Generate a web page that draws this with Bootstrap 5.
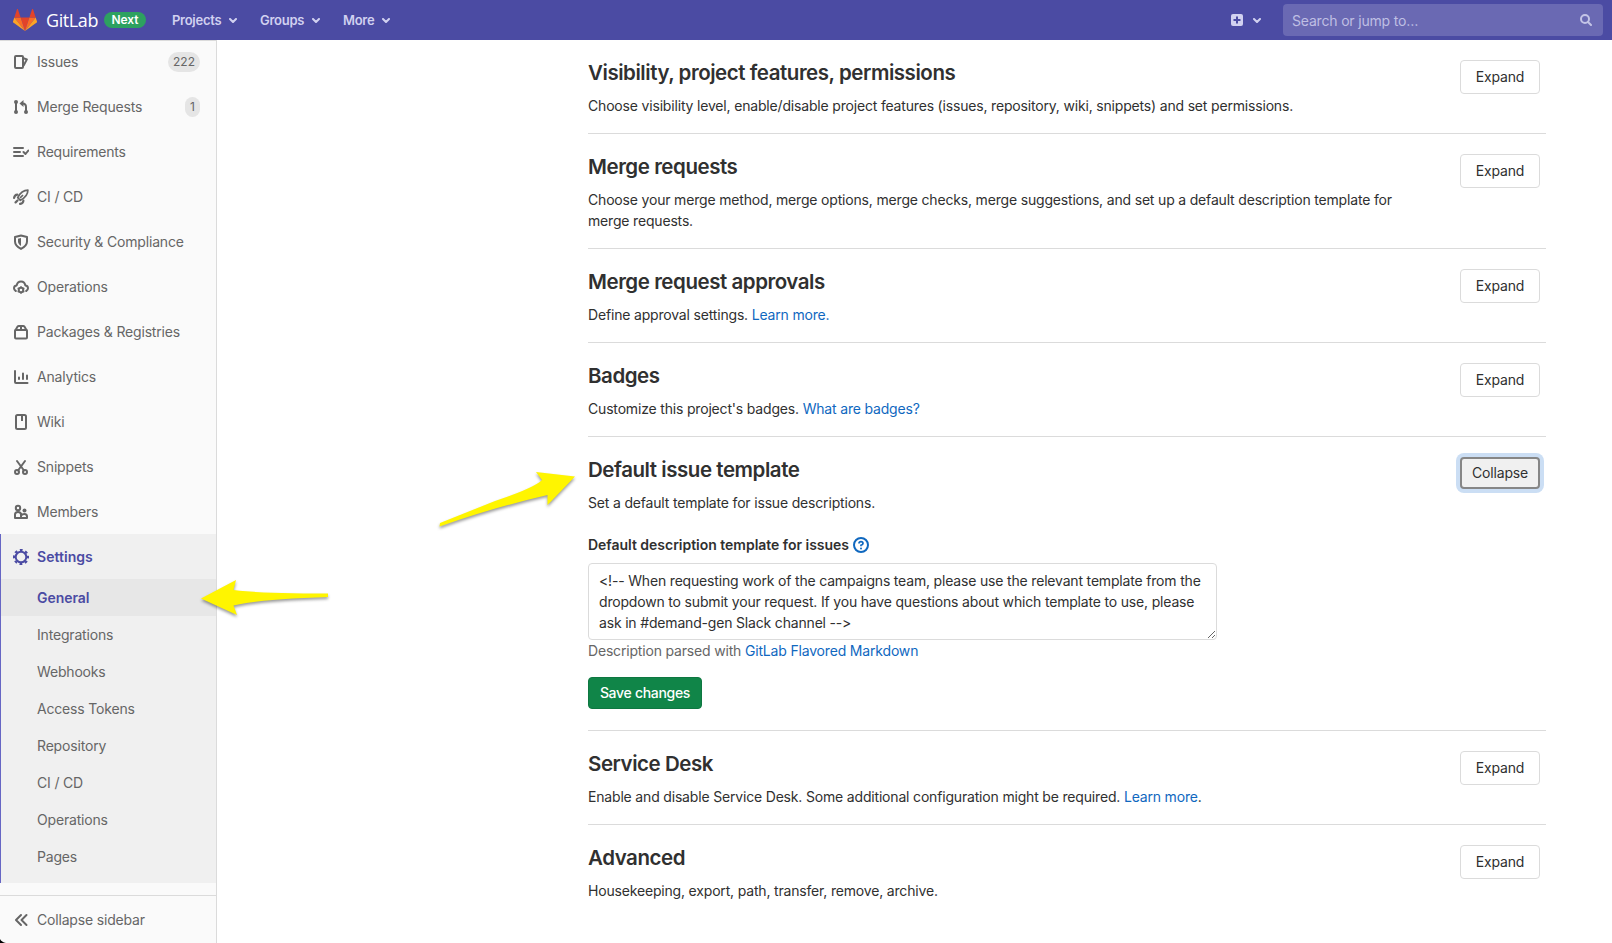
<!DOCTYPE html>
<html lang="en">
<head>
<meta charset="utf-8">
<meta name="viewport" content="width=device-width, initial-scale=1">
<title>General · Settings · GitLab</title>
<link href="https://cdn.jsdelivr.net/npm/bootstrap@5.3.0/dist/css/bootstrap.min.css" rel="stylesheet">
<script src="https://cdn.jsdelivr.net/npm/bootstrap@5.3.0/dist/js/bootstrap.bundle.min.js" defer></script>
<style>
body{font-family:Inter,"Noto Sans",sans-serif;font-size:14px;line-height:21px;letter-spacing:-.178px;color:#303030;height:943px;overflow:hidden;background:#fff}
a{color:#1068bf;text-decoration:none}
.topbar{height:40px;background:#4b4ba3;color:#d1d1f0;font-size:13px;flex:none}
.wordmark{font-family:"Open Sans",sans-serif;font-size:18px;color:#fff;line-height:20px;margin-left:9px;width:58px;letter-spacing:-.4px}
.next-pill{background:#2da160;width:42px;height:16px;font-size:12px;font-weight:600;line-height:16px;letter-spacing:-.1px}
.topnav{color:#d1d1f0;font-weight:600;font-size:13px;letter-spacing:-.27px}
.chev{width:8px;height:5px;fill:none;stroke:#d1d1f0;stroke-width:2;stroke-linecap:round;stroke-linejoin:round}
.search-box{width:320px;height:32px;background:#6a69b3;border-radius:4px;font-size:14px;color:#bfbfe3;padding:0 11px 0 9px;margin-right:9px}
.side{width:217px;background:#fafafa;border-right:1px solid #dbdbdb;border-top:1px solid #dbdbdb;color:#666;flex:none}
.side-item{height:45px;padding:0 16px 0 13px;flex:none}
.side-item svg{width:16px;height:16px;margin-right:8px;flex:none}
.side-item.first-item{margin-top:-2px}
.ico{fill:none;stroke:#666;stroke-width:2;stroke-linejoin:round}
.count-pill{background:#e5e5e5;border-radius:10px;font-size:12px;height:20px;line-height:20px;padding:0 5px;letter-spacing:0}
.open-group{background:#f0f0f0;border-left:1px solid #6666c4;padding-bottom:8px}
.open-group .side-item{padding-left:12px}
.sub-link{height:37px;padding-left:36px;display:flex;align-items:center}
.current{color:#4b4ba3;font-weight:600;letter-spacing:.04px}
.sub-link.current{background:#e7e7e7;letter-spacing:-.05px}
.collapse-bar{height:48px;border-top:1px solid #dbdbdb;margin-top:12px}
.main-col{width:958px;margin-left:371px}
.setting{border-bottom:1px solid #dbdbdb;padding:20px 6px 17px 0}
.setting:last-child{border:0}
.setting h4{font-size:20.5px;line-height:26px;margin:0 0 9px;font-weight:600;letter-spacing:-.45px;color:#303030}
.setting p{width:815px;margin:0}
.gl-btn{width:80px;height:34px;border:1px solid #dbdbdb;border-radius:4px;background:#fff;font-size:14px;line-height:20px;padding:0;color:#303030;flex:none;letter-spacing:-.18px}
.gl-btn.is-open{height:32px;border:2px solid #868686;background:#f0f0f0;box-shadow:0 0 0 4px #cbdef4}
.tpl-label{margin-top:21px;margin-bottom:8px;letter-spacing:-.02px}
.tpl-area{width:629px;height:77px;border:1px solid #dbdbdb;border-radius:4px;padding:6px 10px;font-size:14px;line-height:21px;letter-spacing:-.178px;color:#303030;display:block;resize:vertical;overflow:hidden}
.save-btn{background:#108548;border:1px solid #0e7741;color:#fff;width:114px;height:32px;border-radius:4px;font-size:14px;font-weight:500;padding:0;line-height:20px;letter-spacing:-.3px;margin-top:16px}
.pointer-arrows{left:0;top:0;pointer-events:none;filter:drop-shadow(0 2px 1.5px rgba(0,0,0,.4))}
</style>
</head>
<body class="d-flex flex-column position-relative">
<header class="topbar d-flex align-items-center">
  <svg width="24" height="22" viewBox="0 0 24 22" style="margin-left:13px"><path fill="#e24329" d="M12 22 16.4 8.4H7.6z"/><path fill="#fc6d26" d="M12 22 7.6 8.4H1.3zM12 22l4.4-13.6h6.3z"/><path fill="#fca326" d="M1.3 8.4 0 12.6c-.1.4 0 .8.3 1L12 22zM22.7 8.4 24 12.6c.1.4 0 .8-.3 1L12 22z"/><path fill="#e24329" d="M1.3 8.4h6.3L4.9.3C4.8-.1 4.2-.1 4 .3zM22.7 8.4h-6.3L19.1.3c.1-.4.7-.4.9 0z"/></svg>
  <span class="wordmark">GitLab</span>
  <span class="next-pill rounded-pill text-white text-center">Next</span>
  <nav class="d-flex align-items-center">
    <a class="topnav d-flex align-items-center" href="#" style="margin-left:26px;width:65px"><span>Projects</span><svg class="chev ms-auto" viewBox="0 0 8 5"><path d="M1 1l3 3 3-3"/></svg></a>
    <a class="topnav d-flex align-items-center" href="#" style="margin-left:23px;width:60px"><span>Groups</span><svg class="chev ms-auto" viewBox="0 0 8 5"><path d="M1 1l3 3 3-3"/></svg></a>
    <a class="topnav d-flex align-items-center" href="#" style="margin-left:23px;width:47px"><span>More</span><svg class="chev ms-auto" viewBox="0 0 8 5"><path d="M1 1l3 3 3-3"/></svg></a>
  </nav>
  <div class="ms-auto d-flex align-items-center">
    <svg width="12" height="12" viewBox="0 0 12 12"><rect width="12" height="12" rx="2" fill="#d1d1f0"/><path d="M6 2.5v7M2.5 6h7" stroke="#4b4ba3" stroke-width="2"/></svg>
    <svg class="chev" viewBox="0 0 8 5" style="margin:0 22px 0 10px"><path d="M1 1l3 3 3-3"/></svg>
    <div class="search-box d-flex align-items-center"><span>Search or jump to…</span><svg class="ms-auto" width="12" height="12" viewBox="0 0 12 12" fill="none" stroke="#c4c4e6" stroke-width="2" stroke-linecap="round"><circle cx="5" cy="5" r="4"/><path d="M8 8l3 3"/></svg></div>
  </div>
</header>
<div class="d-flex flex-grow-1">
  <aside class="side d-flex flex-column">
    <a class="side-item first-item d-flex align-items-center text-reset" href="#"><svg class="ico" viewBox="0 0 16 16"><rect x="2" y="2" width="8" height="12" rx="1"/><path d="M10.5 4.2l3.4 1.2-3.4 6.3"/></svg><span>Issues</span><span class="count-pill ms-auto">222</span></a>
    <a class="side-item d-flex align-items-center text-reset" href="#"><svg class="ico" viewBox="0 0 16 16"><path d="M3 3v10M13 13V8q0-3.5-3.5-3.5H9"/><g fill="#666" stroke="none"><circle cx="3" cy="3" r="2"/><circle cx="3" cy="13" r="2"/><circle cx="13" cy="13" r="2"/><path d="M10.5 1v7L6.5 4.5z"/></g></svg><span>Merge Requests</span><span class="count-pill ms-auto">1</span></a>
    <a class="side-item d-flex align-items-center text-reset" href="#"><svg class="ico" viewBox="0 0 16 16" stroke-linecap="round"><path d="M1 4h9M1 8h6M1 12h9M10.500 8l2 2L15.300 6.500"/></svg><span>Requirements</span></a>
    <a class="side-item d-flex align-items-center text-reset" href="#"><svg class="ico" viewBox="0 0 16 16" style="stroke-width:1.7"><path d="M14.900 1.100C10.500 1.100 7.300 3.500 4.700 8.600L7.400 11.300C12.500 8.700 14.900 5.500 14.900 1.100zM7 9l3-3"/><path d="M4.300 5.600C2.400 5.700 1.400 7 1.100 8.900M10.400 11.700C10.300 13.600 9 14.600 7.100 14.900M4.500 11.500 2.600 13.400" stroke-linecap="round" stroke-width="2.200"/></svg><span>CI / CD</span></a>
    <a class="side-item d-flex align-items-center text-reset" href="#"><svg class="ico" viewBox="0 0 16 16"><path d="M8 1.500 14 3v4.500c0 3-2.400 5.500-6 7.400C4.400 13 2 10.500 2 7.500V3z"/><path fill="#666" stroke="none" d="M8 4v8C6 10.600 5 9.200 5 7.500V4.700z"/></svg><span>Security &amp; Compliance</span></a>
    <a class="side-item d-flex align-items-center text-reset" href="#"><svg class="ico" viewBox="0 0 16 16" stroke-linecap="round"><path d="M2.800 12C1.700 11.400 1 10.500 1 9.300 1 7.700 2.200 6.500 3.700 6.400 4.100 3.900 5.800 2.500 8 2.500s3.900 1.400 4.300 3.900C13.800 6.500 15 7.700 15 9.300c0 1.200-.7 2.100-1.800 2.700"/><circle cx="8" cy="11" r="2.300"/><path stroke-width="1.500" d="M8 7.800v.5M8 13.700v.5M5.200 9.400l.5.300M10.300 12.300l.5.300M10.800 9.400l-.5.300M5.700 12.300l-.5.300"/></svg><span>Operations</span></a>
    <a class="side-item d-flex align-items-center text-reset" href="#"><svg class="ico" viewBox="0 0 16 16"><rect x="2" y="6" width="12" height="8.500" rx="1"/><path d="M2 7 4.600 2.600Q5 2 5.800 2h4.400q.8 0 1.200.6L14 7M8 2v4"/></svg><span>Packages &amp; Registries</span></a>
    <a class="side-item d-flex align-items-center text-reset" href="#"><svg class="ico" viewBox="0 0 16 16" stroke-linecap="round"><path d="M2 2v11q0 1 1 1h11.500M6 8.500v1.500M10 4.500v5.500M14 6.500v3.500"/></svg><span>Analytics</span></a>
    <a class="side-item d-flex align-items-center text-reset" href="#"><svg class="ico" viewBox="0 0 16 16"><rect x="3" y="1" width="10" height="14" rx="1.500"/><path d="M9 1v6"/></svg><span>Wiki</span></a>
    <a class="side-item d-flex align-items-center text-reset" href="#"><svg class="ico" viewBox="0 0 16 16"><circle cx="4" cy="13" r="2"/><circle cx="12" cy="13" r="2"/><path stroke-linecap="round" d="M4 2l7 9.500M12 2 5 11.500"/></svg><span>Snippets</span></a>
    <a class="side-item d-flex align-items-center text-reset" href="#"><svg class="ico" viewBox="0 0 16 16"><circle cx="5" cy="4" r="2.200"/><path d="M2 14v-3.500Q2 8 5 8t3 2.500V14zM8 14h6v-1.500Q14 10 11.500 10 9 10 8.500 11.500"/><circle cx="11.500" cy="6.500" r="2" fill="#666" stroke="none"/></svg><span>Members</span></a>
    <div class="open-group">
      <a class="side-item current d-flex align-items-center" href="#"><svg viewBox="0 0 16 16" fill="none" stroke="#4b4ba3"><circle cx="8" cy="8" r="5.300" stroke-width="2"/><circle cx="8" cy="8" r="7" stroke-width="2.200" stroke-dasharray="2.750 2.748" stroke-dashoffset="1.375"/></svg><span>Settings</span></a>
      <a class="sub-link current" href="#">General</a>
      <a class="sub-link text-reset" href="#">Integrations</a>
      <a class="sub-link text-reset" href="#">Webhooks</a>
      <a class="sub-link text-reset" href="#">Access Tokens</a>
      <a class="sub-link text-reset" href="#">Repository</a>
      <a class="sub-link text-reset" href="#">CI / CD</a>
      <a class="sub-link text-reset" href="#">Operations</a>
      <a class="sub-link text-reset" href="#">Pages</a>
    </div>
    <a class="side-item collapse-bar d-flex align-items-center text-reset" href="#"><svg class="ico" viewBox="0 0 16 16" stroke-linecap="round"><path d="M8 3 3 8l5 5M13.500 3l-5 5 5 5"/></svg><span>Collapse sidebar</span></a>
  </aside>
  <main class="main-col">
    <section class="setting d-flex justify-content-between align-items-start"><div><h4>Visibility, project features, permissions</h4><p>Choose visibility level, enable/disable project features (issues, repository, wiki, snippets) and set permissions.</p></div><button class="gl-btn">Expand</button></section>
    <section class="setting d-flex justify-content-between align-items-start"><div><h4>Merge requests</h4><p>Choose your merge method, merge options, merge checks, merge suggestions, and set up a default description template for<br>merge requests.</p></div><button class="gl-btn">Expand</button></section>
    <section class="setting d-flex justify-content-between align-items-start"><div><h4>Merge request approvals</h4><p>Define approval settings. <a href="#">Learn more.</a></p></div><button class="gl-btn">Expand</button></section>
    <section class="setting d-flex justify-content-between align-items-start"><div><h4>Badges</h4><p>Customize this project's badges. <a href="#">What are badges?</a></p></div><button class="gl-btn">Expand</button></section>
    <section class="setting pb-0 d-flex justify-content-between align-items-start" style="height:294px"><div><h4>Default issue template</h4><p>Set a default template for issue descriptions.</p>
      <form>
        <label class="tpl-label fw-semibold d-flex align-items-center" for="tpl"><span>Default description template for issues</span><svg width="16" height="16" viewBox="0 0 16 16" fill="none" stroke="#1068bf" stroke-width="2" style="margin-left:4px"><circle cx="8" cy="8" r="7"/><path d="M6 6.500Q6 4.700 8 4.700t2 1.700Q10 7.500 8 8.200V9.300" stroke-width="1.700"/><circle cx="8" cy="11.500" r="1" fill="#1068bf" stroke="none"/></svg></label>
        <textarea class="tpl-area" id="tpl" spellcheck="false">&lt;!-- When requesting work of the campaigns team, please use the relevant template from the
dropdown to submit your request. If you have questions about which template to use, please
ask in #demand-gen Slack channel --&gt;</textarea>
        <div style="color:#666">Description parsed with <a href="#">GitLab Flavored Markdown</a></div>
        <button class="save-btn" type="button">Save changes</button>
      </form></div><button class="gl-btn is-open">Collapse</button></section>
    <section class="setting d-flex justify-content-between align-items-start"><div><h4>Service Desk</h4><p>Enable and disable Service Desk. Some additional configuration might be required. <a href="#">Learn more</a>.</p></div><button class="gl-btn">Expand</button></section>
    <section class="setting d-flex justify-content-between align-items-start"><div><h4>Advanced</h4><p>Housekeeping, export, path, transfer, remove, archive.</p></div><button class="gl-btn">Expand</button></section>
  </main>
</div>
<svg class="pointer-arrows position-absolute" width="620" height="660" viewBox="0 0 620 660" fill="#fff500"><path d="M201 598.500 236 580 233.500 590Q262 593.500 328 593.500V597Q262 599 233.500 605.500L237 615z"/><path d="M575 476.500 536 472 542 480Q534 488 495 501L440 523 439.500 526.500Q495 507 547.500 495V505z"/></svg>
<svg class="position-absolute bottom-0 start-0" width="6" height="4" viewBox="0 0 6 4"><path d="M0 0Q1.500 3 6 4H0z"/></svg>
</body>
</html>
